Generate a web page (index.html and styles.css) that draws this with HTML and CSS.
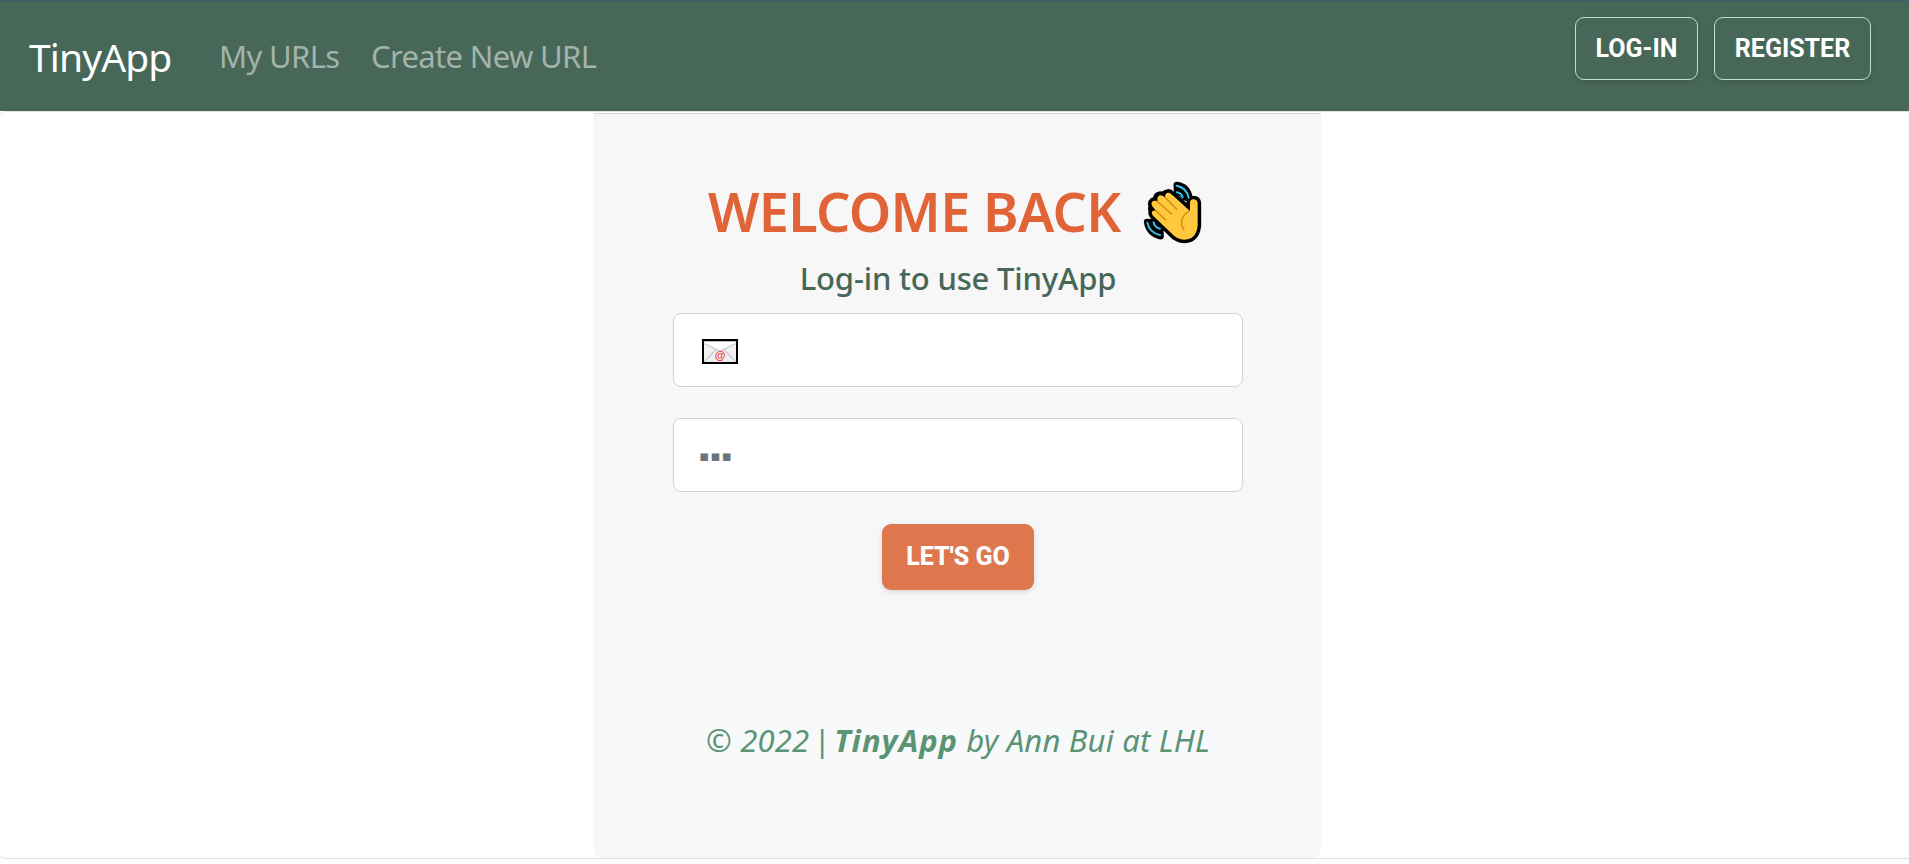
FILE: index.html
```html
<!DOCTYPE html>
<html lang="en">
<head>
<meta charset="utf-8">
<title>TinyApp</title>
<link rel="stylesheet" href="styles.css">
</head>
<body>
<header class="navbar">
  <a class="brand">TinyApp</a>
  <nav class="links">
    <a class="link link-urls">My URLs</a>
    <a class="link link-create">Create New URL</a>
  </nav>
  <div class="actions">
    <button class="btn btn-outline btn-login">LOG-IN</button>
    <button class="btn btn-outline btn-register">REGISTER</button>
  </div>
</header>
<main class="card">
  <section class="panel">
    <h1 class="title"><span>WELCOME BACK</span>
      <svg class="wave" viewBox="37 31 186 195" width="62" height="65" aria-hidden="true">
        <g fill="#000" stroke="#000" stroke-width="21" stroke-linejoin="round" stroke-linecap="round">
          <path d="M181 123V98Q182 89 191 89Q203 89 204 101V168Q202 194 184 206Q162 215 143 205Q133 200 122 188L70 138Q64 130 68 125Q63 116 68 110Q62 101 70 94Q78 91 82 91Q79 79 90 76Q99 74 105 80Q104 70 114 69Q121 68 127 75Z"/>
          <path d="M141 46Q175 50 180 88L165 83Q158 70 142 67ZM52 157Q58 192 93 200L92 178L73 158Z" stroke-width="19"/>
        </g>
        <path fill="#ffc83d" d="M181 124V98Q182 89 191 89Q203 89 204 101V168Q202 194 184 206Q162 215 143 205Q133 200 122 188L70 138Q64 130 68 125Q72 121 79 123L68 110Q62 101 70 94Q78 91 85 97Q79 84 90 77Q98 76 107 84Q104 72 114 69Q121 68 127 75Z"/>
        <g fill="none" stroke="#d08c0d" stroke-width="4" stroke-linecap="round"><path d="M79 123L108 151M82 94L125 133M106 83L141 119M178 124Q143 148 163 181"/></g>
        <g fill="none" stroke="#35c1f1" stroke-width="6" stroke-linecap="round"><path d="M141 48Q171 54 177 84M142 68Q155 70 159 83M53 159Q59 189 91 196M72 158Q75 174 91 177"/></g>
      </svg>
    </h1>
    <p class="subtitle">Log-in to use TinyApp</p>
    <form class="form">
      <label class="field email">
        <svg width="36" height="25" viewBox="0 0 36 25" aria-hidden="true">
          <path fill="#000" d="M0 0h36v25H0z"/>
          <path fill="#f0f0f0" d="M2 2.500h32v20.500H2z"/>
          <path fill="#fff" d="M2 2.500h32v2L18 12 2 4.500z"/>
          <path fill="none" stroke="#ccc" stroke-width="1.200" d="M2 4.500l16 7.500L34 4.500M2.500 22.500L14 10.500M33.500 22.500L22 10.500"/>
          <text x="18" y="20" class="at">@</text>
        </svg>
      </label>
      <input class="field secret" type="password" placeholder="▪▪▪">
      <button class="btn btn-go" type="button">LET'S GO</button>
    </form>
    <footer class="footer">© 2022<span class="pipe"> | </span><strong>TinyApp</strong> by Ann Bui at LHL</footer>
  </section>
</main>
</body>
</html>
```
FILE: styles.css
```css
* { box-sizing: border-box; }
body { margin: 0; height: 864px; overflow: hidden; background: #fff; font-family: "Noto Sans", "Open Sans", sans-serif; }
.navbar { height: 111px; display: flex; align-items: flex-start; padding: 0 38px 0 29px; background: #476759; border-top: 1px solid #445779; }
.brand { width: 190px; margin-top: 29px; font-size: 39px; line-height: 54px; letter-spacing: -.9px; color: #fff; }
.links { display: flex; margin-top: 33px; }
.link { font-size: 31px; line-height: 44px; color: #a3b3ac; white-space: nowrap; letter-spacing: -.65px; }
.link-urls { width: 152px; }
.actions { display: flex; gap: 16px; margin: 16px 0 0 auto; }
.btn { padding: 0; font: 700 25px/1 Roboto, sans-serif; color: #fff; border-radius: 9px; box-shadow: 0 2px 5px rgba(0,0,0,.13); }
.btn-outline { height: 63px; border: 1px solid #bde3c9; background: transparent; }
.btn-login { width: 123px; }
.btn-register { width: 157px; }
.card { height: 748px; border: 1px solid #dfdfdf; border-width: 1px 0; border-radius: 6px 0 0 6px; }
.panel { width: 727px; height: 745px; margin: 1px 0 0 594px; padding: 66px 78px 0 79px; border-top: 1px solid #d3d6d4; border-radius: 0 0 8px 8px; background: #f7f7f7; display: flex; flex-direction: column; }
.title { margin: 0; height: 66px; display: flex; padding-left: 35px; font-size: 54px; line-height: 62px; font-weight: 600; letter-spacing: -.65px; color: #e06437; white-space: nowrap; }
.title span { width: 434px; }
.wave { flex: none; }
.subtitle { margin: 9px 0 11px; height: 47px; text-align: center; font-size: 31px; line-height: 47px; font-weight: 500; letter-spacing: -.17px; color: #476759; }
.form { display: flex; flex-direction: column; align-items: center; }
.field { width: 570px; height: 74px; margin-bottom: 31px; display: flex; align-items: center; border: 1px solid #d1d1d9; border-radius: 8px; background: #fff; }
.email { padding: 3px 28px 0; }
.at { font: 700 11px "Liberation Sans", sans-serif; fill: #f03a17; text-anchor: middle; }
.secret { padding: 2px 25px 0; font: 15px "DejaVu Sans", sans-serif; letter-spacing: 1.1px; }
.secret::placeholder { color: #6c757d; opacity: 1; }
.btn-go { width: 152px; height: 66px; padding-bottom: 1px; border: 0; background: #df774e; margin-top: 1px; font-weight: 800; }
.footer { height: 111px; margin-top: 94px; text-align: center; font-size: 31px; line-height: 113px; font-style: italic; white-space: nowrap; letter-spacing: .18px; color: #5b9474; background: #f8f9fa; }
.pipe { word-spacing: -4.5px; }
.footer strong { letter-spacing: 1px; }
```
